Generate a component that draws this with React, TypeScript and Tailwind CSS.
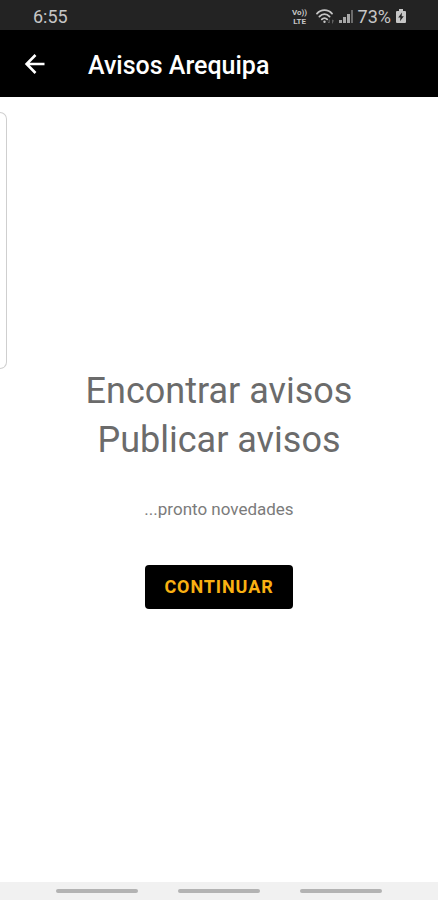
import React from 'react';

const navMarks = ['recientes', 'inicio', 'atras'];

const StatusBar: React.FC = () => (
  <div className="flex h-[30px] shrink-0 items-center justify-between bg-[#232323] pl-[33px] pr-[31px] text-[18px] leading-5 text-[#c6c6c6]">
    <span className="pt-1">6:55</span>
    <div className="flex items-center pt-1">
      <div className="mr-2 flex w-4 flex-col items-center text-[8px] font-bold leading-[9px]">
        <span>Vo))</span>
        <span>LTE</span>
      </div>

      {/* Wifi with the small up/down arrows */}
      <svg className="mr-1 h-4 w-[19px]" viewBox="0 0 19 16" fill="none" stroke="currentColor" strokeWidth="1.8" strokeLinecap="round">
        <path d="M1 4.6C5 0 12 0 16 4.6" />
        <path d="M3.4 7.6C6.4 4.2 10.6 4.2 13.6 7.6" />
        <path d="M5.8 10.4c1.6-1.8 3.8-1.8 5.4 0" />
        <circle cx="8.5" cy="12.8" r="1.2" fill="currentColor" stroke="none" />
        <path d="M13.2 11v3l-1-1M16.6 14v-3l1 1" stroke="#666" strokeWidth="1" />
      </svg>

      {/* Signal strength, last bar empty */}
      <svg className="mr-[5px] h-4 w-[14px]" viewBox="0 0 14 16">
        <path d="M0 11h3v3H0zM4 8h3v6H4zM8 5h3v9H8z" fill="#a8a8a8" />
        <path d="M12 1h2v13h-2z" fill="#6b6b6b" />
      </svg>

      <span className="mr-1">73%</span>

      <svg className="h-4 w-3" viewBox="0 0 12 16">
        <path d="M4 0h4v2h2a1 1 0 0 1 1 1v10a1 1 0 0 1-1 1H2a1 1 0 0 1-1-1V3a1 1 0 0 1 1-1h2z" fill="currentColor" />
        <path d="M7 3.5 3.2 8.4h2.2L5 12.2l3.8-5H6.6z" fill="#232323" />
      </svg>
    </div>
  </div>
);

const AppBar: React.FC = () => (
  <header className="flex h-[67px] shrink-0 items-center bg-black pl-5 text-white">
    <button type="button" aria-label="Volver" className="flex h-8 w-8 items-center justify-center">
      <svg className="h-8 w-8" viewBox="0 0 32 32" fill="none" stroke="currentColor" strokeWidth="2.6">
        <path d="M24.5 16H7M15.5 7 6.6 16l8.9 9" />
      </svg>
    </button>
    <h1 className="pl-9 pt-1 text-[25px] font-medium leading-8">Avisos Arequipa</h1>
  </header>
);

export default function App() {
  return (
    <div className="flex min-h-screen flex-col bg-white font-['Roboto',sans-serif]">
      <StatusBar />
      <AppBar />

      <main className="relative flex flex-1 flex-col items-center justify-center pb-1">
        {/* Edge panel handle */}
        <div className="absolute left-0 top-[15px] h-[257px] w-[7px] rounded-r-lg border border-l-0 border-[#cfcfcf]" />

        <h2 className="text-center text-[36px] font-normal leading-[49px] text-[#6b6b6b]">
          Encontrar avisos
          <br />
          Publicar avisos
        </h2>
        <p className="mt-8 text-[17px] leading-6 text-[#7b7b7b]">...pronto novedades</p>
        <button type="button" className="mt-11 h-11 w-[148px] rounded bg-black text-[18px] font-bold tracking-wider text-[#f9b112]">
          CONTINUAR
        </button>
      </main>

      <nav className="flex h-[18px] shrink-0 items-center justify-center gap-10 bg-[#f1f1f1]">
        {navMarks.map((mark) => (
          <button key={mark} type="button" aria-label={mark} className="h-1 w-[82px] rounded-full bg-[#b3b3b3]" />
        ))}
      </nav>
    </div>
  );
}
